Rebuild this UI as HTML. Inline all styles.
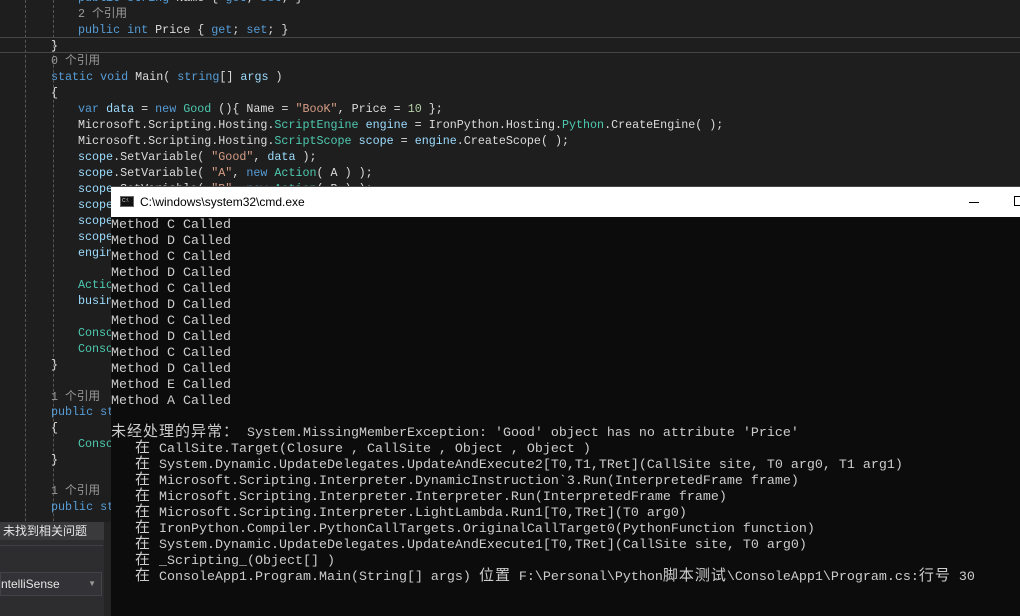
<!DOCTYPE html>
<html><head><meta charset="utf-8"><style>
*{margin:0;padding:0;box-sizing:border-box}
body{width:1020px;height:616px;overflow:hidden;background:#1e1e1e;position:relative;font-family:"Liberation Mono","Noto Sans CJK SC",monospace}
.l{position:absolute;height:16px;line-height:16px;font-size:11.7px;white-space:pre;color:#dcdcdc}
.k{color:#569cd6}.t{color:#4ec9b0}.s{color:#d69d85}.r{color:#999;font-family:"Liberation Mono","Noto Sans CJK SC",monospace}.n{color:#b5cea8}.v{color:#9cdcfe}
.g{position:absolute;top:0;width:0;border-left:1px dashed #555;height:616px}
#cmd{position:absolute;left:111px;top:186px;width:909px;height:430px;background:#0c0c0c;border-top:1px solid #444}
#tb{height:30px;background:#fff;position:relative;font-family:"Liberation Sans",sans-serif;font-size:12px;color:#000}
.c{position:absolute;left:0;height:16px;line-height:16px;font-size:13.33px;white-space:pre;color:#ccc}
.z{font-size:15px;font-family:"Noto Sans CJK SC",sans-serif;display:inline-block;width:16px;height:16px;line-height:16px;vertical-align:top;position:relative;top:-3px;overflow:visible}
</style></head><body>
<div class="g" style="left:25px"></div><div class="g" style="left:53px"></div>
<div style="position:absolute;left:0;top:37px;width:1020px;height:16px;border-top:1px solid #464646;border-bottom:1px solid #464646"></div>
<div class="l" style="left:78px;top:-10px"><span class="k">public</span> <span class="k">string</span> Name { <span class="k">get</span>; <span class="k">set</span>; }</div>
<div class="l r" style="left:78px;top:6px">2 个引用</div>
<div class="l" style="left:78px;top:22px"><span class="k">public</span> <span class="k">int</span> Price { <span class="k">get</span>; <span class="k">set</span>; }</div>
<div class="l" style="left:51px;top:38px">}</div>
<div class="l r" style="left:51px;top:53px">0 个引用</div>
<div class="l" style="left:51px;top:69px"><span class="k">static</span> <span class="k">void</span> Main( <span class="k">string</span>[] <span class="v">args</span> )</div>
<div class="l" style="left:51px;top:85px">{</div>
<div class="l" style="left:78px;top:101px"><span class="k">var</span> <span class="v">data</span> = <span class="k">new</span> <span class="t">Good</span> (){ Name = <span class="s">"BooK"</span>, Price = <span class="n">10</span> };</div>
<div class="l" style="left:78px;top:117px">Microsoft.Scripting.Hosting.<span class="t">ScriptEngine</span> <span class="v">engine</span> = IronPython.Hosting.<span class="t">Python</span>.CreateEngine( );</div>
<div class="l" style="left:78px;top:133px">Microsoft.Scripting.Hosting.<span class="t">ScriptScope</span> <span class="v">scope</span> = <span class="v">engine</span>.CreateScope( );</div>
<div class="l" style="left:78px;top:149px"><span class="v">scope</span>.SetVariable( <span class="s">"Good"</span>, <span class="v">data</span> );</div>
<div class="l" style="left:78px;top:165px"><span class="v">scope</span>.SetVariable( <span class="s">"A"</span>, <span class="k">new</span> <span class="t">Action</span>( A ) );</div>
<div class="l" style="left:78px;top:181px"><span class="v">scope</span>.SetVariable( <span class="s">"B"</span>, <span class="k">new</span> <span class="t">Action</span>( B ) );</div>
<div class="l v" style="left:78px;top:197px">scope</div>
<div class="l v" style="left:78px;top:213px">scope</div>
<div class="l v" style="left:78px;top:229px">scope</div>
<div class="l v" style="left:78px;top:245px">engine</div>
<div class="l t" style="left:78px;top:277px">Action</div>
<div class="l v" style="left:78px;top:293px">business</div>
<div class="l t" style="left:78px;top:325px">Console</div>
<div class="l t" style="left:78px;top:341px">Console</div>
<div class="l" style="left:51px;top:357px">}</div>
<div class="l r" style="left:51px;top:389px">1 个引用</div>
<div class="l k" style="left:51px;top:404px">public static</div>
<div class="l" style="left:51px;top:420px">{</div>
<div class="l t" style="left:78px;top:436px">Console</div>
<div class="l" style="left:51px;top:452px">}</div>
<div class="l r" style="left:51px;top:483px">1 个引用</div>
<div class="l k" style="left:51px;top:499px">public static</div>
<div style="position:absolute;left:0;top:522px;width:111px;height:94px;background:#2d2d30">
 <div style="height:18px;background:#3a3a3d;color:#e6e6e6;font:12px 'Noto Sans CJK SC',sans-serif;line-height:18px;padding-left:3px">未找到相关问题</div>
 <div style="position:absolute;top:23px;left:0;width:103px;height:1px;background:#3f3f46"></div>
 <div style="position:absolute;top:50px;left:0;width:102px;height:24px;background:#333337;border:1px solid #434346;color:#e6e6e6;font:12px 'Liberation Sans',sans-serif;line-height:22px">ntelliSense<span style="position:absolute;right:5px;font-size:8px;color:#999">▼</span></div>
 <div style="position:absolute;top:0;left:104px;width:7px;height:94px;background:#252526"></div>
</div>
<div id="cmd">
 <div id="tb">
  <div style="position:absolute;left:9px;top:9px;width:14px;height:11px;background:#111;border:1px solid #666;color:#ddd;font-size:5px;line-height:9px;padding-left:1px">C:\</div>
  <div style="position:absolute;left:29px;top:8px">C:\windows\system32\cmd.exe</div>
  <div style="position:absolute;left:858px;top:15px;width:10px;height:1px;background:#000"></div>
  <div style="position:absolute;left:903px;top:9px;width:10px;height:10px;border:1px solid #000"></div>
 </div>
 <div style="position:relative">
<div class="c" style="top:1px">Method C Called</div>
<div class="c" style="top:17px">Method D Called</div>
<div class="c" style="top:33px">Method C Called</div>
<div class="c" style="top:49px">Method D Called</div>
<div class="c" style="top:65px">Method C Called</div>
<div class="c" style="top:81px">Method D Called</div>
<div class="c" style="top:97px">Method C Called</div>
<div class="c" style="top:113px">Method D Called</div>
<div class="c" style="top:129px">Method C Called</div>
<div class="c" style="top:145px">Method D Called</div>
<div class="c" style="top:161px">Method E Called</div>
<div class="c" style="top:177px">Method A Called</div>
<div class="c" style="top:209px"><span class="z">未</span><span class="z">经</span><span class="z">处</span><span class="z">理</span><span class="z">的</span><span class="z">异</span><span class="z">常</span><span class="z">：</span> System.MissingMemberException: 'Good' object has no attribute 'Price'</div>
<div class="c" style="top:225px">   <span class="z">在</span> CallSite.Target(Closure , CallSite , Object , Object )</div>
<div class="c" style="top:241px">   <span class="z">在</span> System.Dynamic.UpdateDelegates.UpdateAndExecute2[T0,T1,TRet](CallSite site, T0 arg0, T1 arg1)</div>
<div class="c" style="top:257px">   <span class="z">在</span> Microsoft.Scripting.Interpreter.DynamicInstruction`3.Run(InterpretedFrame frame)</div>
<div class="c" style="top:273px">   <span class="z">在</span> Microsoft.Scripting.Interpreter.Interpreter.Run(InterpretedFrame frame)</div>
<div class="c" style="top:289px">   <span class="z">在</span> Microsoft.Scripting.Interpreter.LightLambda.Run1[T0,TRet](T0 arg0)</div>
<div class="c" style="top:305px">   <span class="z">在</span> IronPython.Compiler.PythonCallTargets.OriginalCallTarget0(PythonFunction function)</div>
<div class="c" style="top:321px">   <span class="z">在</span> System.Dynamic.UpdateDelegates.UpdateAndExecute1[T0,TRet](CallSite site, T0 arg0)</div>
<div class="c" style="top:337px">   <span class="z">在</span> _Scripting_(Object[] )</div>
<div class="c" style="top:353px">   <span class="z">在</span> ConsoleApp1.Program.Main(String[] args) <span class="z">位</span><span class="z">置</span> F:\Personal\Python<span class="z">脚</span><span class="z">本</span><span class="z">测</span><span class="z">试</span>\ConsoleApp1\Program.cs:<span class="z">行</span><span class="z">号</span> 30</div>
 </div>
</div>
</body></html>
